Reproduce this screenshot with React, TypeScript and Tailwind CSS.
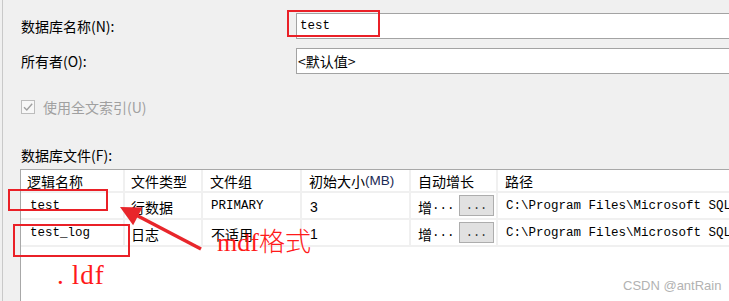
import React from "react";

const cjk = "font-['Noto_Sans_CJK_SC','Noto_Sans',sans-serif]";
const mono = "font-['Liberation_Mono','Noto_Sans_CJK_SC',monospace]";

function DotsButton() {
  return (
    <div className="ml-auto mr-[2px] flex h-[21px] w-[35px] items-center justify-center border border-[#adadad] bg-[#e1e1e1] font-['Liberation_Mono',monospace] text-[12px] leading-none text-[#333]">
      ...
    </div>
  );
}

type Row = { name: string; type: string; group: string; groupMono: boolean; size: string };

const rows: Row[] = [
  { name: "test", type: "行数据", group: "PRIMARY", groupMono: true, size: "3" },
  { name: "test_log", type: "日志", group: "不适用", groupMono: false, size: "1" },
];

export default function App() {
  const cell = "flex items-center border-r-2 border-[#f0f0f0] overflow-hidden whitespace-nowrap";
  return (
    <div className={`relative h-[301px] w-[729px] overflow-hidden bg-[#f0f0f0] text-[#000] ${cjk}`}>
      <div className="ml-[2px] flex h-full flex-col border-l border-[#c9c9c9] pl-[18px] pt-[13px]">
        {/* name */}
        <div className="flex h-[26px] items-center">
          <div className="w-[275px] text-[14px] leading-none">数据库名称(N):</div>
          <div className={`flex h-[26px] flex-1 items-center border border-r-0 border-[#a3a3a3] bg-white pl-[3px] text-[12.5px] ${mono}`}>
            test
          </div>
        </div>
        {/* owner */}
        <div className="mt-[9px] flex h-[26px] items-center">
          <div className="w-[275px] text-[14px] leading-none">所有者(O):</div>
          <div className="flex h-[26px] flex-1 items-center border border-r-0 border-[#a3a3a3] bg-white pl-[1px] text-[14px] leading-none">
            &lt;默认值&gt;
          </div>
        </div>
        {/* checkbox */}
        <div className="mt-[23px] flex h-[20px] items-center">
          <div className="flex h-[14px] w-[14px] items-center justify-center border border-[#bcbcbc] bg-[#f7f7f7]">
            <svg width="12" height="12" viewBox="0 0 12 12">
              <path d="M2 6.2 L4.8 9 L10.2 2.8" fill="none" stroke="#a0a0a0" strokeWidth="1.4" />
            </svg>
          </div>
          <div className="ml-[8px] text-[14px] leading-none text-[#a0a0a0]">使用全文索引(U)</div>
        </div>
        {/* files label */}
        <div className="mt-[28px] flex h-[20px] items-center text-[14px] leading-none">数据库文件(F):</div>
        {/* table */}
        <div className="-ml-[1px] mt-[4px] flex-1 -mr-[20px] border-l border-t border-[#a8a8a8] bg-white">
          <div className="grid grid-cols-[104px_78px_99px_109px_87px_1fr] text-[14px] leading-none">
            {/* header */}
            <div className={`${cell} h-[23px] border-b-2 pl-[6px]`}>逻辑名称</div>
            <div className={`${cell} h-[23px] border-b-2 pl-[6px]`}>文件类型</div>
            <div className={`${cell} h-[23px] border-b-2 pl-[7px]`}>文件组</div>
            <div className={`${cell} h-[23px] border-b-2 pl-[7px]`}>
              初始大小<span className="font-['Liberation_Sans',sans-serif] text-[13.5px] text-[#1a2a55]">(MB)</span>
            </div>
            <div className={`${cell} h-[23px] border-b-2 pl-[7px]`}>自动增长</div>
            <div className={`${cell} h-[23px] border-b-2 pl-[7px]`}>路径</div>
            {rows.map((r) => (
              <React.Fragment key={r.name}>
                <div className={`${cell} h-[27px] border-b-2 pl-[9px] pt-[2px] text-[12.5px] ${mono}`}>{r.name}</div>
                <div className={`${cell} h-[27px] border-b-2 pl-[6px] pt-[2px]`}>{r.type}</div>
                <div className={`${cell} h-[27px] border-b-2 pl-[8px] pt-[2px] ${r.groupMono ? `text-[12.5px] ${mono}` : ""}`}>
                  {r.group}
                </div>
                <div className={`${cell} h-[27px] border-b-2 pl-[8px] pt-[2px] font-['Liberation_Sans',sans-serif]`}>{r.size}</div>
                <div className={`${cell} h-[27px] border-b-2 pl-[7px]`}>
                  <span className="pt-[2px]">增</span>
                  <span className={`pt-[2px] text-[12.5px] ${mono}`}>...</span>
                  <DotsButton />
                </div>
                <div className={`${cell} h-[27px] border-b-2 pl-[8px] pt-[2px] text-[12.5px] ${mono}`}>
                  C:\Program Files\Microsoft SQL Server\MSSQL
                </div>
              </React.Fragment>
            ))}
          </div>
        </div>
      </div>

      {/* annotations */}
      <div className="absolute left-[287px] top-[10px] h-[27px] w-[93px] border-2 border-[#ea2027]" />
      <div className="absolute left-[8px] top-[189px] h-[22px] w-[100px] border-2 border-[#ea2027]" />
      <div className="absolute left-[13px] top-[224px] h-[33px] w-[117px] border-2 border-[#ea2027]" />
      <svg className="pointer-events-none absolute left-0 top-0" width="729" height="301" viewBox="0 0 729 301">
        <polygon points="120,207 142.5,207.4 133.1,225.2" fill="#e8262b" />
        <line x1="136" y1="215" x2="201" y2="249" stroke="#e8262b" strokeWidth="3.5" />
      </svg>
      <div className="absolute left-[217px] top-[227px] flex items-baseline leading-none text-[#ff1a1a]">
        <span className="font-['Liberation_Serif',serif] text-[26px]">mdf</span>
        <span className={`text-[26px] font-light ${cjk}`}>格式</span>
      </div>
      <div className="absolute left-[57px] top-[262px] flex items-baseline font-['Liberation_Serif',serif] text-[27px] leading-none text-[#ff1a1a]">
        <span className="mr-[8px]">.</span>
        <span className="tracking-[1px]">ldf</span>
      </div>
      <div className="absolute left-[623px] top-[279px] font-['Liberation_Sans',sans-serif] text-[13px] leading-none text-[#b2b2b2]">
        CSDN @antRain
      </div>
    </div>
  );
}
